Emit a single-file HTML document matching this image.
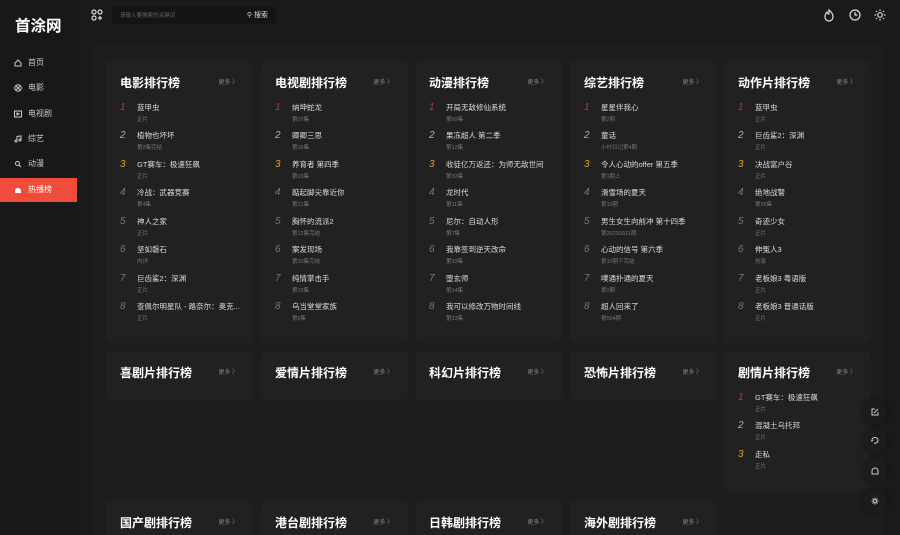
<!DOCTYPE html><html><head><meta charset="utf-8"><style>
*{margin:0;padding:0;box-sizing:border-box}
html,body{width:900px;height:535px;overflow:hidden}
body{background:#1a1a1a;font-family:"Liberation Sans","Noto Sans CJK SC",sans-serif;color:#ddd;position:relative}
.side{position:absolute;left:0;top:0;width:78px;height:535px;background:#181818}
.logo{position:absolute;left:15px;top:14px;font-size:15.5px;font-weight:bold;color:#fff}
.nav{position:absolute;left:0;width:77px;height:24px;font-size:8px;color:#ccc;line-height:24px;padding-left:28px}
.nav svg{position:absolute;left:14px;top:8px}
.nav.on{background:#f04c3c;color:#fff}
.panel{position:absolute;left:92px;top:44px;width:793px;height:500px;background:#1d1d1d;border-radius:6px}
.card{position:absolute;background:#212121;border-radius:5px;width:147px}
.card h3{position:absolute;left:14px;top:13px;font-size:12px;color:#fff;font-weight:bold}
.more{position:absolute;right:15px;top:16px;font-size:6px;color:#888}
.it{position:absolute;left:0;height:28px;width:147px}
.n{position:absolute;left:14px;top:0;font-size:10px;font-style:italic;color:#777;width:10px}
.t{position:absolute;left:31px;top:0;font-size:7.5px;color:#ddd;white-space:nowrap}
.s{position:absolute;left:31px;top:13px;font-size:5.5px;color:#777}
.fb{position:absolute;left:863px;width:24px;height:24px;border-radius:50%;background:#1c1c1c;box-shadow:0 0 4px #111}
.fb svg{position:absolute;left:8px;top:8px}
</style></head><body>
<div class="side">
<div class="logo">首涂网</div>
<div class="nav" style="top:51px"><svg width="8" height="8" viewBox="0 0 8 8" fill="none" stroke="#ccc"><path d="M1 4L4 1L7 4V7H1Z"/></svg>首页</div>
<div class="nav" style="top:76px"><svg width="8" height="8" viewBox="0 0 8 8" fill="none" stroke="#ccc"><circle cx="4" cy="4" r="3.3"/><path d="M2 2L6 6M6 2L2 6"/></svg>电影</div>
<div class="nav" style="top:102px"><svg width="8" height="8" viewBox="0 0 8 8" fill="none" stroke="#ccc"><rect x="0.5" y="1" width="7" height="6"/><path d="M3 3L5 4L3 5Z"/></svg>电视剧</div>
<div class="nav" style="top:127px"><svg width="8" height="8" viewBox="0 0 8 8" fill="none" stroke="#ccc"><path d="M3 6V1.5L7 1V5"/><circle cx="2" cy="6" r="1"/><circle cx="6" cy="5" r="1"/></svg>综艺</div>
<div class="nav" style="top:152px"><svg width="8" height="8" viewBox="0 0 8 8" fill="none" stroke="#ccc"><circle cx="3.5" cy="3.5" r="2"/><path d="M5 5L7 7"/></svg>动漫</div>
<div class="nav on" style="top:178px"><svg width="8" height="8" viewBox="0 0 8 8" fill="#fff"><path d="M1 7V5Q1 2 4 2Q7 2 7 5V7Z"/></svg>热播榜</div>
</div>
<svg style="position:absolute;left:91px;top:9px" width="12" height="12" viewBox="0 0 12 12" fill="none" stroke="#ddd" stroke-width="1.2"><circle cx="3" cy="3" r="2"/><circle cx="9" cy="3" r="2"/><circle cx="3" cy="9" r="2"/><path d="M7 9H11M9 7V11"/></svg>
<div style="position:absolute;left:112px;top:6px;width:164px;height:18px;background:#141414;border-radius:3px"><span style="position:absolute;left:8px;top:5px;font-size:5.5px;color:#666">请输入要搜索的关键词</span><span style="position:absolute;right:8px;top:4px;font-size:7px;color:#ddd">&#9906; 搜索</span></div>
<svg style="position:absolute;left:823px;top:9px" width="12" height="13" viewBox="0 0 12 13" fill="none" stroke="#ddd" stroke-width="1.2"><path d="M6 1Q10 4 10 8A4 4 0 0 1 2 8Q2 5 4 3Q4 5 6 5Q6 3 6 1Z"/></svg>
<svg style="position:absolute;left:849px;top:9px" width="12" height="12" viewBox="0 0 12 12" fill="none" stroke="#ddd" stroke-width="1.2"><circle cx="6" cy="6" r="5"/><path d="M6 3V6H8.5"/></svg>
<svg style="position:absolute;left:874px;top:9px" width="12" height="12" viewBox="0 0 12 12" fill="none" stroke="#ddd" stroke-width="1.2"><circle cx="6" cy="6" r="2.3"/><path d="M6 0.5V2M6 10V11.5M0.5 6H2M10 6H11.5M2 2L3 3M9 9L10 10M10 2L9 3M3 9L2 10"/></svg>
<div class="panel"></div>

<div class="card" style="left:106px;top:61px;height:282px"><h3>电影排行榜</h3><span class="more">更多 〉</span>
<div class="it" style="top:41px"><span class="n" style="color:#c3303a">1</span><span class="t">蓝甲虫</span><span class="s">正片</span></div>
<div class="it" style="top:69px"><span class="n" style="color:#b5b596">2</span><span class="t">植物也坏坏</span><span class="s">第2集完结</span></div>
<div class="it" style="top:98px"><span class="n" style="color:#e2a123">3</span><span class="t">GT赛车：极速狂飙</span><span class="s">正片</span></div>
<div class="it" style="top:126px"><span class="n">4</span><span class="t">冷战：武器竞赛</span><span class="s">第4集</span></div>
<div class="it" style="top:155px"><span class="n">5</span><span class="t">神人之家</span><span class="s">正片</span></div>
<div class="it" style="top:183px"><span class="n">6</span><span class="t">坚如磐石</span><span class="s">内详</span></div>
<div class="it" style="top:212px"><span class="n">7</span><span class="t">巨齿鲨2：深渊</span><span class="s">正片</span></div>
<div class="it" style="top:240px"><span class="n">8</span><span class="t">查佩尔明星队 - 路奈尔：奥克...</span><span class="s">正片</span></div>
</div>
<div class="card" style="left:261px;top:61px;height:282px"><h3>电视剧排行榜</h3><span class="more">更多 〉</span>
<div class="it" style="top:41px"><span class="n" style="color:#c3303a">1</span><span class="t">纳坤蛇龙</span><span class="s">第07集</span></div>
<div class="it" style="top:69px"><span class="n" style="color:#b5b596">2</span><span class="t">卿卿三思</span><span class="s">第16集</span></div>
<div class="it" style="top:98px"><span class="n" style="color:#e2a123">3</span><span class="t">养育者 第四季</span><span class="s">第10集</span></div>
<div class="it" style="top:126px"><span class="n">4</span><span class="t">踮起脚尖靠近你</span><span class="s">第21集</span></div>
<div class="it" style="top:155px"><span class="n">5</span><span class="t">胸怀的流派2</span><span class="s">第12集完结</span></div>
<div class="it" style="top:183px"><span class="n">6</span><span class="t">案发现场</span><span class="s">第30集完结</span></div>
<div class="it" style="top:212px"><span class="n">7</span><span class="t">纯情掌击手</span><span class="s">第10集</span></div>
<div class="it" style="top:240px"><span class="n">8</span><span class="t">乌当堂堂家族</span><span class="s">第6集</span></div>
</div>
<div class="card" style="left:415px;top:61px;height:282px"><h3>动漫排行榜</h3><span class="more">更多 〉</span>
<div class="it" style="top:41px"><span class="n" style="color:#c3303a">1</span><span class="t">开局无敌修仙系统</span><span class="s">第99集</span></div>
<div class="it" style="top:69px"><span class="n" style="color:#b5b596">2</span><span class="t">果冻超人 第二季</span><span class="s">第12集</span></div>
<div class="it" style="top:98px"><span class="n" style="color:#e2a123">3</span><span class="t">收徒亿万返还：为师无敌世间</span><span class="s">第32集</span></div>
<div class="it" style="top:126px"><span class="n">4</span><span class="t">龙时代</span><span class="s">第11集</span></div>
<div class="it" style="top:155px"><span class="n">5</span><span class="t">尼尔：自动人形</span><span class="s">第7集</span></div>
<div class="it" style="top:183px"><span class="n">6</span><span class="t">我靠签到逆天改命</span><span class="s">第33集</span></div>
<div class="it" style="top:212px"><span class="n">7</span><span class="t">堕玄师</span><span class="s">第14集</span></div>
<div class="it" style="top:240px"><span class="n">8</span><span class="t">我可以修改万物时间线</span><span class="s">第33集</span></div>
</div>
<div class="card" style="left:570px;top:61px;height:282px"><h3>综艺排行榜</h3><span class="more">更多 〉</span>
<div class="it" style="top:41px"><span class="n" style="color:#c3303a">1</span><span class="t">星星伴我心</span><span class="s">第2期</span></div>
<div class="it" style="top:69px"><span class="n" style="color:#b5b596">2</span><span class="t">童话</span><span class="s">小村日记第4期</span></div>
<div class="it" style="top:98px"><span class="n" style="color:#e2a123">3</span><span class="t">令人心动的offer 第五季</span><span class="s">第1期上</span></div>
<div class="it" style="top:126px"><span class="n">4</span><span class="t">滑雪场的夏天</span><span class="s">第10期</span></div>
<div class="it" style="top:155px"><span class="n">5</span><span class="t">男生女生向前冲 第十四季</span><span class="s">第20230921期</span></div>
<div class="it" style="top:183px"><span class="n">6</span><span class="t">心动的信号 第六季</span><span class="s">第10期下完结</span></div>
<div class="it" style="top:212px"><span class="n">7</span><span class="t">噗通扑通的夏天</span><span class="s">第2期</span></div>
<div class="it" style="top:240px"><span class="n">8</span><span class="t">超人回来了</span><span class="s">第504期</span></div>
</div>
<div class="card" style="left:724px;top:61px;height:282px"><h3>动作片排行榜</h3><span class="more">更多 〉</span>
<div class="it" style="top:41px"><span class="n" style="color:#c3303a">1</span><span class="t">蓝甲虫</span><span class="s">正片</span></div>
<div class="it" style="top:69px"><span class="n" style="color:#b5b596">2</span><span class="t">巨齿鲨2：深渊</span><span class="s">正片</span></div>
<div class="it" style="top:98px"><span class="n" style="color:#e2a123">3</span><span class="t">决战富户谷</span><span class="s">正片</span></div>
<div class="it" style="top:126px"><span class="n">4</span><span class="t">绝地战警</span><span class="s">第25集</span></div>
<div class="it" style="top:155px"><span class="n">5</span><span class="t">奇迹少女</span><span class="s">正片</span></div>
<div class="it" style="top:183px"><span class="n">6</span><span class="t">伸冤人3</span><span class="s">抢版</span></div>
<div class="it" style="top:212px"><span class="n">7</span><span class="t">老板娘3 粤语版</span><span class="s">正片</span></div>
<div class="it" style="top:240px"><span class="n">8</span><span class="t">老板娘3 普通话版</span><span class="s">正片</span></div>
</div>

<div class="card" style="left:106px;top:351px;height:49px"><h3>喜剧片排行榜</h3><span class="more">更多 〉</span></div>
<div class="card" style="left:261px;top:351px;height:49px"><h3>爱情片排行榜</h3><span class="more">更多 〉</span></div>
<div class="card" style="left:415px;top:351px;height:49px"><h3>科幻片排行榜</h3><span class="more">更多 〉</span></div>
<div class="card" style="left:570px;top:351px;height:49px"><h3>恐怖片排行榜</h3><span class="more">更多 〉</span></div>
<div class="card" style="left:724px;top:351px;height:141px"><h3>剧情片排行榜</h3><span class="more">更多 〉</span>
<div class="it" style="top:41px"><span class="n" style="color:#c3303a">1</span><span class="t">GT赛车：极速狂飙</span><span class="s">正片</span></div>
<div class="it" style="top:69px"><span class="n" style="color:#b5b596">2</span><span class="t">混凝土乌托邦</span><span class="s">正片</span></div>
<div class="it" style="top:98px"><span class="n" style="color:#e2a123">3</span><span class="t">走私</span><span class="s">正片</span></div>
</div>

<div class="card" style="left:106px;top:501px;height:49px"><h3>国产剧排行榜</h3><span class="more">更多 〉</span></div>
<div class="card" style="left:261px;top:501px;height:49px"><h3>港台剧排行榜</h3><span class="more">更多 〉</span></div>
<div class="card" style="left:415px;top:501px;height:49px"><h3>日韩剧排行榜</h3><span class="more">更多 〉</span></div>
<div class="card" style="left:570px;top:501px;height:49px"><h3>海外剧排行榜</h3><span class="more">更多 〉</span></div>

<div class="fb" style="top:400px"><svg width="8" height="8" viewBox="0 0 8 8" fill="none" stroke="#ccc"><path d="M4 1H1V7H7V4M3 5L7 1"/></svg></div>
<div class="fb" style="top:429px"><svg width="8" height="8" viewBox="0 0 8 8" fill="none" stroke="#ccc"><path d="M1 3A3 2.5 0 0 1 7 3A3 3 0 0 1 3 6M1 3L2 4M1 3L0.5 4.5"/></svg></div>
<div class="fb" style="top:459px"><svg width="8" height="8" viewBox="0 0 8 8" fill="none" stroke="#ccc"><path d="M1 7V4A3 3 0 0 1 7 4V7Z"/></svg></div>
<div class="fb" style="top:489px"><svg width="8" height="8" viewBox="0 0 8 8" fill="none" stroke="#ccc"><circle cx="4" cy="4" r="1.6"/><path d="M4 0.5V1.8M4 6.2V7.5M0.5 4H1.8M6.2 4H7.5M1.5 1.5L2.4 2.4M5.6 5.6L6.5 6.5M6.5 1.5L5.6 2.4M2.4 5.6L1.5 6.5"/></svg></div>
</body></html>
